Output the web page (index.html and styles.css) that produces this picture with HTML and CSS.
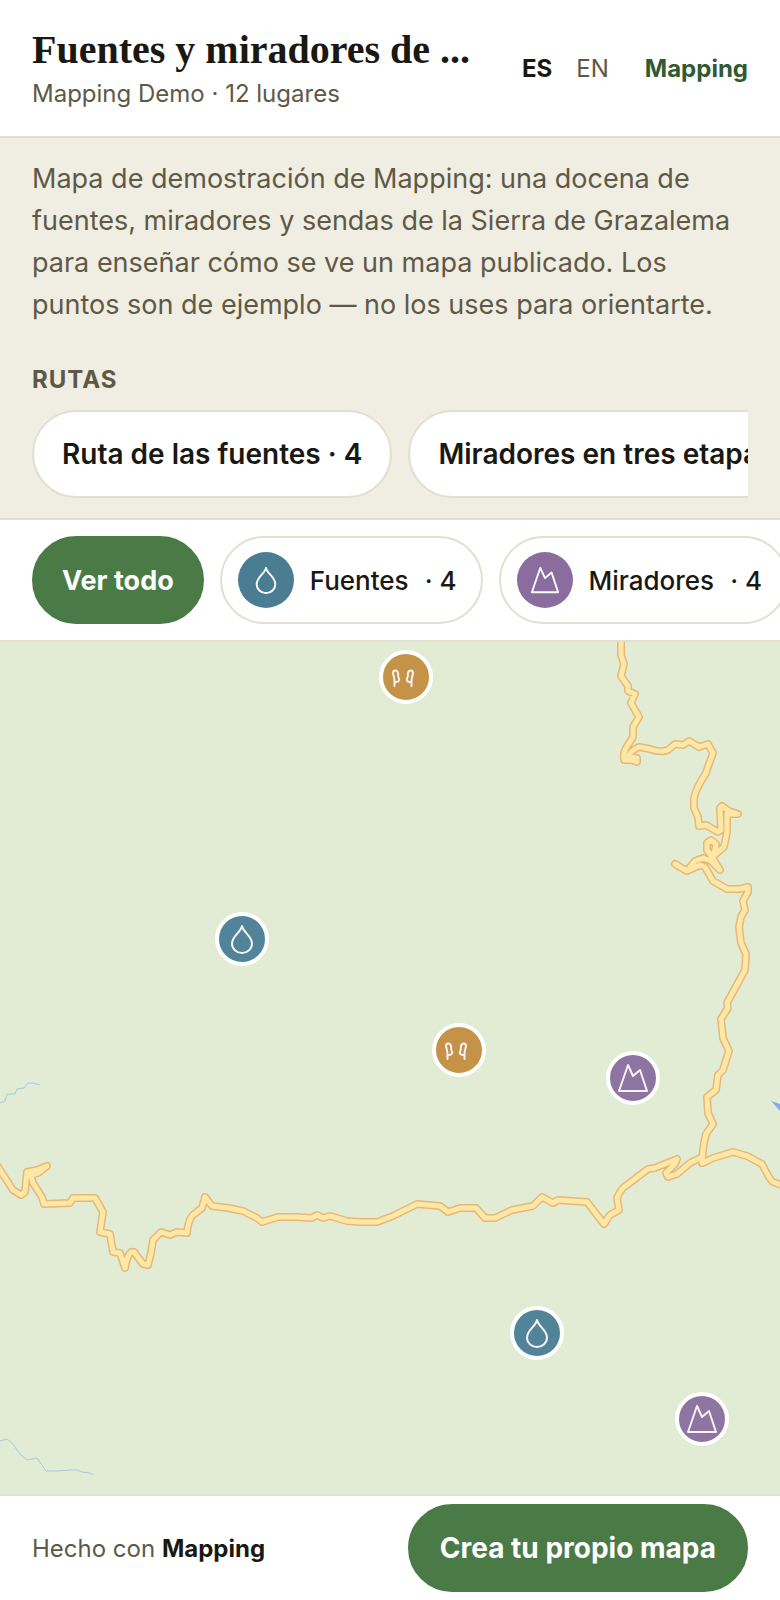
FILE: index.html
```html
<!DOCTYPE html>
<html lang="es">
<head>
<meta charset="utf-8">
<meta name="viewport" content="width=device-width, initial-scale=1">
<title>Fuentes y miradores</title>
<link rel="stylesheet" href="styles.css">
</head>
<body>
<svg class="defs" aria-hidden="true">
  <symbol id="drop" viewBox="0 0 32 32"><path d="M16 3C15 9 6 13 6 20.500a10 9.500 0 0 0 20 0C26 13 17 9 16 3Z"/></symbol>
  <symbol id="peak" viewBox="0 0 32 32"><path d="M2 29 11 3 16 14 23 8 30 29Z"/></symbol>
  <symbol id="steps" viewBox="0 0 32 32"><path d="M4.500 25v-5C4.500 16 3 14 3 12c0-3 4-3.500 5 0 .5 2.500-.5 3.500 1 5.500 1 2-1 4-4.500 3.500M21.500 25v-5c0-4 1.500-6 1.500-8 0-3-4-3.500-5 0-.5 2.500.5 3.500-1 5.500-1 2 1 4 4.500 3.500"/></symbol>
</svg>
<div class="page">
  <header class="header">
    <div class="heading">
      <h1 class="title">Fuentes y miradores de ...</h1>
      <p class="subtitle">Mapping Demo · 12 lugares</p>
    </div>
    <nav class="nav">
      <a class="lang lang-active" href="#es">ES</a>
      <a class="lang" href="#en">EN</a>
      <a class="brand" href="#mapping">Mapping</a>
    </nav>
  </header>
  <section class="intro">
    <p class="description">Mapa de demostración de Mapping: una docena de fuentes, miradores y sendas de la Sierra de Grazalema para enseñar cómo se ve un mapa publicado. Los puntos son de ejemplo — no los uses para orientarte.</p>
    <h2 class="label">RUTAS</h2>
    <div class="routes">
      <button class="chip" type="button">Ruta de las fuentes · 4</button>
      <button class="chip" type="button">Miradores en tres etapas</button>
    </div>
  </section>
  <div class="filters">
    <button class="chip chip-primary chip-all" type="button">Ver todo</button>
    <button class="chip chip-icon" type="button"><span class="badge water"><svg class="icon"><use href="#drop"/></svg></span><span>Fuentes</span><span>· 4</span></button>
    <button class="chip chip-icon" type="button"><span class="badge view"><svg class="icon"><use href="#peak"/></svg></span><span>Miradores</span><span>· 4</span></button>
  </div>
  <main class="map">
    <svg class="terrain" viewBox="0 641 780 854" preserveAspectRatio="xMidYMid slice" aria-hidden="true">
      <defs>
        <path id="north" d="M621 636V655L624 664 621 676 628 686V691L635 694 631 703 639 717 633 727V737L626 748Q623 753 624 760L631 760 637 762V758L628 757Q631 750 639 747L650 749Q660 753 668 750L675 744 683 745 689 741 699 747 708 744 713 753 709 764 706 773Q696 788 694 798L694 808 698 817 699 826 706 825 718 832 721 830 720 808 722 806 729 811 738 814 727 814V832L724 847 712 857 707 850V843L711 840 716 844 715 850 712 857 720 870 711 861 703 858 695 861 687 871 675 864 687 871 700 865 705 867 713 881 727 889H740L748 887 748 892 743 901 745 910 741 917 739 927 741 943 746 954 745 970 727 1003 728 1008 721 1019 723 1038 729 1051 723 1070 718 1075 716 1090 707 1097 708 1113 713 1124 706 1134Q703 1145 702 1163"/>
        <path id="south" d="M-4 1164 0 1170 13 1190 21 1195 25 1192 27 1172 37 1170 47 1166 38 1173 31 1175 33 1183 42 1197 44 1204 70 1203 73 1198H95L103 1212 100 1232 110 1234 113 1252 120 1253 125 1268 Q128 1250 134 1252L143 1264 148 1265 151 1253 153 1240 161 1232 170 1235 177 1232 187 1233Q188 1220 193 1215L202 1208 205 1197 212 1206 228 1208 243 1211 257 1218 262 1222 278 1217 296 1217 312 1218 317 1215 323 1218 330 1216 347 1221 360 1222 377 1222 393 1216 417 1204 440 1206 448 1212 460 1208H476L485 1218H495L512 1210 533 1206 542 1197 553 1203 558 1200 587 1202 604 1224 610 1215 619 1210 617 1198Q621 1188 627 1185L648 1169 655 1168 677 1159 675 1164 666 1173 668 1177 677 1174 690 1163 702 1157 703 1163 713 1158 733 1152 747 1156 762 1164Q770 1180 773 1182L784 1186"/>
      </defs>
      <path class="stream" d="M0 1103 5 1101 7 1094 15 1094 17 1089 24 1088 28 1083 33 1083 40 1085M0 1441 7 1439 12 1443 20 1454 27 1460 37 1458 46 1471 57 1471 72 1470 78 1470 82 1472 90 1473 93 1475"/>
      <path class="river" d="M771 1101 780 1104V1111Z"/>
      <use class="road-edge" href="#north"/><use class="road-edge" href="#south"/>
      <use class="road" href="#north"/><use class="road" href="#south"/>
    </svg>
    <button class="pin trail p1" type="button" aria-label="Senda"><svg class="icon"><use href="#steps"/></svg></button>
    <button class="pin water p2" type="button" aria-label="Fuente"><svg class="icon"><use href="#drop"/></svg></button>
    <button class="pin trail p3" type="button" aria-label="Senda"><svg class="icon"><use href="#steps"/></svg></button>
    <button class="pin view p4" type="button" aria-label="Mirador"><svg class="icon"><use href="#peak"/></svg></button>
    <button class="pin water p5" type="button" aria-label="Fuente"><svg class="icon"><use href="#drop"/></svg></button>
    <button class="pin view p6" type="button" aria-label="Mirador"><svg class="icon"><use href="#peak"/></svg></button>
  </main>
  <footer class="footer">
    <p class="credit">Hecho con <a class="credit-link" href="#mapping">Mapping</a></p>
    <a class="chip chip-primary cta" href="#crear">Crea tu propio mapa</a>
  </footer>
</div>
</body>
</html>
```
FILE: styles.css
```css
* { box-sizing: border-box; }
body {
  margin: 0;
  font-family: Inter, "Liberation Sans", sans-serif;
  font-size: 24px;
  color: #1a1812;
  background: #fff;
}
h1, h2, p { margin: 0; }
a { color: inherit; text-decoration: none; }
button { font: inherit; color: inherit; cursor: pointer; }
.defs { position: absolute; width: 0; height: 0; }
.page { display: flex; flex-direction: column; min-height: 100vh; }

.header {
  display: flex;
  align-items: center;
  justify-content: space-between;
  gap: 32px;
  padding: 24px 32px;
  border-bottom: 2px solid #e2dfd0;
}
.heading { min-width: 0; }
.title {
  font: 700 40px/52px "Liberation Serif", serif;
  overflow: hidden;
  white-space: nowrap;
  text-overflow: ellipsis;
}
.subtitle { line-height: 36px; color: #5e5947; }
.nav { display: flex; align-items: center; flex-shrink: 0; gap: 24px; }
.lang { color: #5e5947; }
.lang-active { font-weight: 700; color: #1a1812; }
.brand { margin-left: 12px; font-weight: 700; color: #2f5a32; }

.intro {
  padding: 20px 32px;
  background: #f0ede2;
  border-bottom: 2px solid #e2dfd0;
}
.description { font-size: 27px; line-height: 42px; color: #5e5947; }
.label {
  margin: 36px 0 12px;
  font-size: 24px;
  line-height: 36px;
  font-weight: 700;
  letter-spacing: 1px;
  color: #5e5947;
}
.routes, .filters { display: flex; gap: 16px; overflow: hidden; }
.filters { padding: 16px 0 16px 32px; border-bottom: 2px solid #e2dfd0; }
.chip {
  display: flex;
  align-items: center;
  flex-shrink: 0;
  height: 88px;
  padding: 0 28px;
  border: 2px solid #e2dfd0;
  border-radius: 44px;
  background: #fff;
  font-size: 28px;
  font-weight: 600;
  white-space: nowrap;
}
.chip-primary { background: #4a7a45; border-color: #4a7a45; color: #fff; font-weight: 700; }
.chip-all { font-size: 27px; }
.chip-icon { gap: 16px; padding: 0 24px 0 16px; font-size: 26px; font-weight: 500; }
.badge {
  display: grid;
  place-items: center;
  width: 56px;
  height: 56px;
  border-radius: 50%;
}
.icon {
  display: block;
  width: 32px;
  height: 32px;
  fill: none;
  stroke: #fff;
  stroke-width: 2;
  stroke-linejoin: round;
  stroke-linecap: round;
}
.badge .icon { width: 30px; height: 30px; }
.water { background: #4a7c92; }
.view { background: #8a6c9e; }
.trail { background: #c49347; }

.map {
  position: relative;
  flex: 1 0 480px;
  overflow: hidden;
  background: #e2ecd5;
}
.terrain { position: absolute; inset: 0; width: 100%; height: 100%; }
.road-edge, .road { fill: none; stroke-linejoin: round; stroke-linecap: round; }
.road-edge { stroke: #e6b878; stroke-width: 8; }
.road { stroke: #ffe7a6; stroke-width: 5; }
.stream { fill: none; stroke: #a6c8e2; stroke-width: 1; }
.river { fill: #82aaf5; }
.pin {
  position: absolute;
  display: grid;
  place-items: center;
  width: 54px;
  height: 54px;
  padding: 0;
  border: 4px solid #fff;
  border-radius: 50%;
  transform: translate(-50%, -50%);
}
.pin .icon { stroke: #f8f2f8; }
.pin.water { background: #528499; }
.pin.view { background: #8e74a1; }
.p1 { left: 52.1%; top: 4.1%; }
.p2 { left: 31%; top: 34.9%; }
.p3 { left: 58.9%; top: 47.9%; }
.p4 { left: 81.1%; top: 51.2%; }
.p5 { left: 68.9%; top: 81.1%; }
.p6 { left: 90%; top: 91.2%; }

.footer {
  display: flex;
  align-items: center;
  justify-content: space-between;
  padding: 8px 32px;
  border-top: 2px solid #e2dfd0;
}
.credit { color: #5e5947; }
.credit-link { font-weight: 700; color: #1a1812; }
.cta { padding: 0 30px; }
```
